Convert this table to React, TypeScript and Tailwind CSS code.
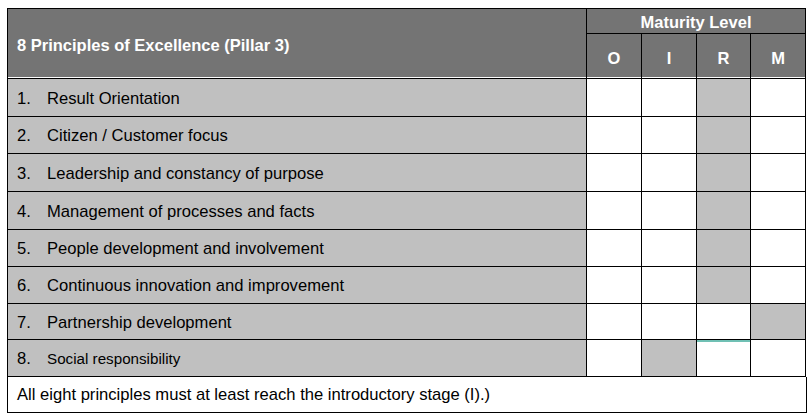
import React from "react";

const rows: { n: string; t: string; shade: number; small?: boolean; h: number }[] = [
  { n: "1.", t: "Result Orientation", shade: 2, h: 38 },
  { n: "2.", t: "Citizen / Customer focus", shade: 2, h: 37 },
  { n: "3.", t: "Leadership and constancy of purpose", shade: 2, h: 38 },
  { n: "4.", t: "Management of processes and facts", shade: 2, h: 38 },
  { n: "5.", t: "People development and involvement", shade: 2, h: 37 },
  { n: "6.", t: "Continuous innovation and improvement", shade: 2, h: 37 },
  { n: "7.", t: "Partnership development", shade: 3, h: 36 },
  { n: "8.", t: "Social responsibility", shade: 1, small: true, h: 37 },
];

const widths = [55, 55, 54, 55];

export default function App() {
  return (
    <div className="w-[811px] h-[418px] bg-white pl-[7px] pt-[8px]" style={{ fontFamily: '"Liberation Sans", Arial, sans-serif' }}>
      <div className="w-[799px] border-l border-t border-black">
        {/* header */}
        <div className="flex">
          <div className="w-[579px] h-[70px] bg-[#747474] border-r border-b border-black flex items-center pl-[9px] pt-[4px] text-white font-bold text-[16.5px] shadow-[inset_0_-1px_0_#ffffff]">
            8 Principles of Excellence (Pillar 3)
          </div>
          <div className="w-[219px] flex flex-col">
            <div className="h-[25px] bg-[#747474] border-r border-b border-black flex items-center justify-center text-white font-bold text-[16.5px] pt-[3px]">
              Maturity Level
            </div>
            <div className="flex">
              {["O", "I", "R", "M"].map((l, i) => (
                <div
                  key={l}
                  className="h-[45px] bg-[#747474] border-r border-b border-black flex items-center justify-center text-white font-bold text-[16.5px] pt-[5px] shadow-[inset_0_-1px_0_#ffffff]"
                  style={{ width: widths[i] }}
                >
                  {l}
                </div>
              ))}
            </div>
          </div>
        </div>
        {rows.map((r, ri) => (
          <div key={r.n} className="flex" style={{ height: r.h }}>
            <div className="w-[579px] bg-[#c0c0c0] border-r border-b border-black flex items-center pl-[9px] pt-[3px] text-black text-[16.6px]">
              <span className="w-[30px]">{r.n}</span>
              <span className={r.small ? "text-[15.2px]" : ""}>{r.t}</span>
            </div>
            {widths.map((w, i) => (
              <div
                key={i}
                className={`border-r border-b border-black ${i === r.shade ? "bg-[#c0c0c0]" : "bg-white"} ${ri === 7 && i === 2 ? "shadow-[inset_0_2px_0_#70c0b4]" : ""}`}
                style={{ width: w }}
              />
            ))}
          </div>
        ))}
        <div className="h-[36px] w-[799px] border-r border-b border-black flex items-center pl-[9px] pt-[2px] text-[16.6px] text-black">
          All eight principles must at least reach the introductory stage (I).)
        </div>
      </div>
    </div>
  );
}
